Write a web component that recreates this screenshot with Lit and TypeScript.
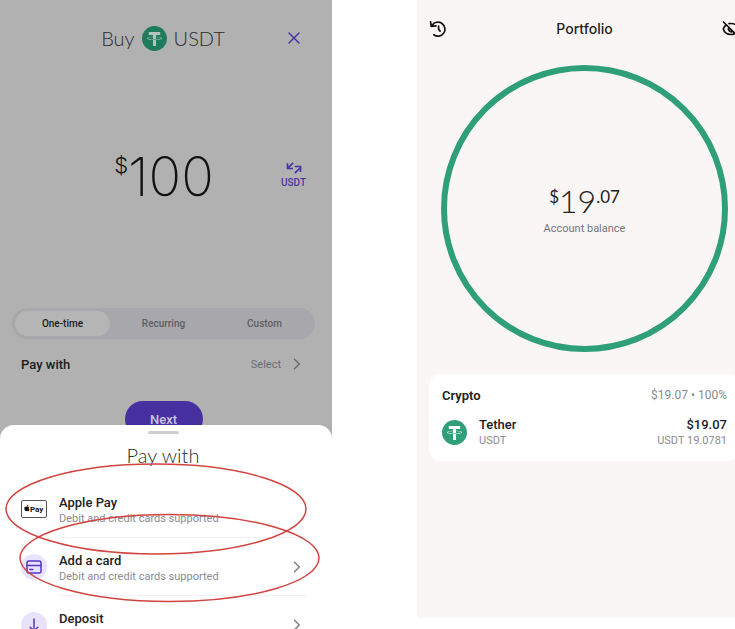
import { LitElement, html, css, svg } from "lit";
import { customElement, property, state } from "lit/decorators.js";
import { classMap } from "lit/directives/class-map.js";

const chevron = html`<svg class="chevron" viewBox="0 0 8 12" width="8" height="12" aria-hidden="true">
  <path d="M1.5 1.2 6.3 6 1.5 10.8" fill="none" stroke="currentColor" stroke-width="1.6" stroke-linecap="round" stroke-linejoin="round" />
</svg>`;

@customElement("tether-logo")
class TetherLogo extends LitElement {
  @property({ type: Boolean }) dim = false;

  static styles = css`
    :host { display: block; flex: none; width: 25px; height: 25px; }
    .logo { display: block; width: 100%; height: 100%; }
    .coin { fill: #2f9f79; }
    .mark { fill: #fff; }
    .dim .coin { fill: #207a5c; }
    .dim .mark { fill: #b4c4bd; }
  `;
  render() {
    return html`<svg class=${classMap({ logo: true, dim: this.dim })} viewBox="0 0 32 32" aria-hidden="true">
      <circle class="coin" cx="16" cy="16" r="16" />
      <path class="mark" d="M17.9 17.4v0c-.1 0-.7.1-1.9.1-1 0-1.7 0-1.9-.1-3.9-.2-6.8-.9-6.8-1.7s2.9-1.5 6.8-1.7v2.700c.3 0 1 .1 1.900.1 1.200 0 1.700-.1 1.900-.1V14c3.900.2 6.800.9 6.800 1.700s-2.900 1.500-6.800 1.700m0-3.600v-2.400h5.400V7.800H8.700v3.600h5.400v2.400c-4.400.2-7.700 1.100-7.700 2.100s3.300 1.900 7.700 2.100v7.600h3.800V18c4.400-.2 7.700-1 7.700-2.100s-3.300-1.900-7.700-2.100" />
    </svg>`;
  }
}

@customElement("pay-option")
class PayOption extends LitElement {
  @property() label = "";
  @property() detail = "";
  @property() icon = "card";
  @property({ type: Boolean }) arrow = false;

  static styles = css`
    :host { display: block; }
    .option {
      display: flex; align-items: stretch; width: 100%; height: 58px; padding: 0 25px 0 21px;
      border: 0; background: none; font: inherit; color: inherit; text-align: left; gap: 12px;
    }
    .icon { flex: none; width: 26px; display: flex; align-items: center; justify-content: center; }
    .body { flex: 1; display: flex; align-items: center; border-bottom: 1px solid #f3f1f5; }
    .text { flex: 1; display: flex; flex-direction: column; padding-top: 4px; }
    .label { font-size: 13px; line-height: 17px; font-weight: 500; color: #222; }
    .detail { font-size: 11px; line-height: 16px; color: #8b8a93; min-height: 16px; }
    .chevron { color: #85848b; margin-right: 6px; }
    .disc { width: 26px; height: 26px; border-radius: 50%; background: #e9e2fc; display: grid; place-items: center; }
    .badge { display: block; }
    .mark { font-size: 8px; font-weight: 700; fill: #111; }
  `;

  private glyph() {
    if (this.icon === "apple") {
      return html`<svg class="badge" width="26" height="18" viewBox="0 0 26 18" aria-hidden="true">
        <rect x="0.5" y="0.5" width="25" height="17" rx="1.5" fill="#fff" stroke="#555" />
        <path fill="#111" d="M6.2 6.700c.6-.3 1.500-.3 2.100.4-.8.6-.8 1.800.2 2.300-.3 1-.9 1.900-1.500 1.900-.4 0-.6-.2-1-.2s-.6.200-1 .2c-.7 0-1.700-1.600-1.700-2.800 0-1.500 1.200-2.300 2.200-1.800zM6 6.300c0-.8.6-1.400 1.300-1.500.1.800-.5 1.500-1.300 1.500z" />
        <text class="mark" x="9" y="12">Pay</text>
      </svg>`;
    }
    const shape = this.icon === "card"
      ? svg`<rect x="1" y="2" width="14" height="12" rx="2" /><path d="M1 6.5h14M3.8 10.5h3" />`
      : svg`<path d="M8 2v12M4.2 10.2 8 14l3.8-3.8" />`;
    return html`<span class="disc"><svg width="16" height="16" viewBox="0 0 16 16" fill="none" stroke="#5436c4"
      stroke-width="1.5" stroke-linecap="round" stroke-linejoin="round" aria-hidden="true">${shape}</svg></span>`;
  }

  render() {
    return html`<button class="option">
      <span class="icon">${this.glyph()}</span>
      <span class="body">
        <span class="text"><span class="label">${this.label}</span><span class="detail">${this.detail}</span></span>
        ${this.arrow ? chevron : ""}
      </span>
    </button>`;
  }
}

@customElement("buy-screen")
class BuyScreen extends LitElement {
  @state() private schedule = "One-time";

  static styles = css`
    :host { display: flex; flex-direction: column; min-width: 0; overflow: hidden; background: #b1b1b1; color: #1c1c1c; }
    :host > * { flex-shrink: 0; }
    button { font: inherit; border: 0; padding: 0; background: none; color: inherit; }
    h1, h2, p { margin: 0; font-weight: 300; }
    .top { display: grid; grid-template-columns: 1fr auto 1fr; align-items: center; height: 40px; margin-top: 18px; padding: 0 31px 0 25px; }
    .title { grid-column: 2; display: flex; align-items: center; gap: 7px; font-family: Lato, sans-serif; font-size: 20px; line-height: 26px; color: #2c2c2c; }
    .close { justify-self: end; color: #4a34a4; width: 14px; height: 14px; }
    .close svg { display: block; }
    .amount { display: grid; grid-template-columns: 1fr auto 1fr; align-items: center; height: 72px; margin-top: 83px; padding: 0 26px 0 22px; }
    .value { grid-column: 2; display: flex; align-items: flex-start; font-family: Inter, sans-serif; font-size: 54px; line-height: 64px; font-weight: 200; color: #111; }
    .sign { font-size: 22px; line-height: 40px; font-weight: 300; }
    .swap { justify-self: end; display: flex; flex-direction: column; align-items: center; gap: 3px; padding-bottom: 3px; color: #4a34a4; font-size: 10px; line-height: 12px; font-weight: 500; }
    .tabs { display: grid; grid-template-columns: repeat(3, 1fr); margin: 95px 17px 0 12px; border-radius: 16px; background: #a8a8ac; }
    .tab { height: 25px; margin: 3px; border-radius: 13px; font-size: 10px; line-height: 12px; font-weight: 500; color: #5f5e65; }
    .on { background: #b5b5b5; color: #1c1c1c; }
    .method { display: flex; align-items: center; height: 20px; margin: 15px 31px 0 21px; font-size: 13px; }
    .name { flex: 1; font-weight: 500; text-align: left; }
    .pick { display: flex; align-items: center; gap: 12px; font-size: 11px; color: #6d6c73; }
    .next { align-self: center; width: 78px; height: 36px; margin: 27px 5px 0 0; border-radius: 18px; background: #4630a0; color: #c9c3e2; font-size: 13px; font-weight: 500; }
    .sheet { position: relative; flex-grow: 1; margin-top: -12px; padding-top: 6px; border-radius: 14px 14px 0 0; background: #fff; }
    .head { display: flex; flex-direction: column; align-items: center; gap: 8px; padding: 0 6px 12px 0; }
    .handle { width: 31px; height: 3px; border-radius: 2px; background: #cfcfcf; }
    .heading { font-family: Lato, sans-serif; font-size: 20px; line-height: 26px; color: #2c2c2c; }
    .rings { position: absolute; left: 0; top: 0; width: 100%; height: 180px; pointer-events: none; overflow: visible; }
  `;

  render() {
    return html`
      <header class="top">
        <h1 class="title">Buy <tether-logo dim></tether-logo> USDT</h1>
        <button class="close" aria-label="Close"><svg width="14" height="14" viewBox="0 0 14 14" aria-hidden="true">
          <path d="M2 2l10 10M12 2 2 12" stroke="currentColor" stroke-width="1.5" stroke-linecap="round" /></svg></button>
      </header>
      <div class="amount">
        <p class="value"><span class="sign">$</span>100</p>
        <button class="swap"><svg width="16" height="12" viewBox="0 0 16 12" fill="none" stroke="currentColor" stroke-width="1.7" aria-hidden="true">
          <path d="M7.2.8 1.8 6.2M1.500 1.200v5.300H7M8.800 11.200l5.200-5.200M8.800 4.500h5.700V10" /></svg>USDT</button>
      </div>
      <div class="tabs" role="group" aria-label="Schedule">
        ${["One-time", "Recurring", "Custom"].map((name) => html`<button
          class=${classMap({ tab: true, on: name === this.schedule })}
          aria-pressed=${name === this.schedule} @click=${() => (this.schedule = name)}>${name}</button>`)}
      </div>
      <button class="method"><span class="name">Pay with</span><span class="pick">Select ${chevron}</span></button>
      <button class="next">Next</button>
      <section class="sheet">
        <div class="head"><div class="handle"></div><h2 class="heading">Pay with</h2></div>
        <pay-option icon="apple" label="Apple Pay" detail="Debit and credit cards supported"></pay-option>
        <pay-option icon="card" label="Add a card" detail="Debit and credit cards supported" arrow></pay-option>
        <pay-option icon="deposit" label="Deposit" arrow></pay-option>
        <svg class="rings" viewBox="0 0 332 180" fill="none" stroke="#d0433f" stroke-width="1.5" aria-hidden="true">
          <ellipse cx="156" cy="84" rx="150" ry="45" /><ellipse cx="169.5" cy="133" rx="149.5" ry="43.5" />
        </svg>
      </section>`;
  }
}

@customElement("portfolio-screen")
class PortfolioScreen extends LitElement {
  static styles = css`
    :host { display: block; min-width: 0; background: #fbf6f6; color: #222; }
    button { font: inherit; border: 0; padding: 0; background: none; color: inherit; }
    h1, h2, p { margin: 0; }
    .bar { display: flex; align-items: center; justify-content: space-between; height: 24px; margin: 17px -5px 0 12px; }
    .bar svg { display: block; }
    .title { font-size: 14px; line-height: 24px; font-weight: 500; font-family: Inter, sans-serif; }
    .ring { display: flex; flex-direction: column; align-items: center; justify-content: center; box-sizing: border-box;
      margin: 24px 7px 0 24px; padding-top: 4px; aspect-ratio: 1; border: 6px solid #2f9f79; border-radius: 50%; }
    .balance { display: flex; align-items: flex-start; font-family: Lato, sans-serif; font-size: 32px; line-height: 32px; font-weight: 300; }
    .small { font-size: 17px; line-height: 24px; font-weight: 400; }
    .caption { font-size: 11px; line-height: 16px; margin-top: 4px; color: #77757a; }
    .card { margin: 22px -4px 0 12px; padding: 11px 12px 12px 13px; border-radius: 12px; background: #fff; }
    .line { display: flex; align-items: center; justify-content: space-between; height: 20px; }
    .group { font-size: 13px; font-weight: 600; }
    .share { font-size: 12px; color: #8b8a93; }
    .asset { display: flex; align-items: center; gap: 12px; margin-top: 10px; }
    .names { flex: 1; display: flex; flex-direction: column; padding-top: 2px; }
    .worth { text-align: right; }
    .main { font-size: 13px; line-height: 16px; font-weight: 500; }
    .sub { font-size: 11px; line-height: 16px; color: #8b8a93; }
  `;

  render() {
    return html`
      <header class="bar">
        <button aria-label="History"><svg width="18" height="18" viewBox="0 0 18 18" fill="none" stroke="#111" stroke-width="1.7" stroke-linecap="round" stroke-linejoin="round" aria-hidden="true">
          <path d="M3.200 5.200A7 7 0 1 1 4.800 14.800M1.600 1.800l.6 4.600 4.800-.6M9.600 6v3.300l1.500 1.800" /></svg></button>
        <h1 class="title">Portfolio</h1>
        <button aria-label="Hide balance"><svg width="18" height="18" viewBox="0 0 18 18" fill="none" stroke="#111" stroke-width="1.7" stroke-linecap="round" aria-hidden="true">
          <path d="M1.500 2l14 14M4 5C2.500 6.200 1.500 8 1.300 9c1 3.500 4 5.500 7.700 5.500 1.500 0 2.500-.3 3.500-.8M7 3.700c4.500-.8 8.500 1.300 9.700 5.300-.3 1-.9 2-1.700 2.800M6.800 7.500a3 3 0 0 0 4 4" /></svg></button>
      </header>
      <div class="ring">
        <p class="balance"><span class="small">$</span>19<span class="small">.07</span></p>
        <p class="caption">Account balance</p>
      </div>
      <section class="card">
        <div class="line"><h2 class="group">Crypto</h2><span class="share">$19.07 • 100%</span></div>
        <div class="asset">
          <tether-logo></tether-logo>
          <div class="names"><span class="main">Tether</span><span class="sub">USDT</span></div>
          <div class="names worth"><span class="main">$19.07</span><span class="sub">USDT 19.0781</span></div>
        </div>
      </section>`;
  }
}

@customElement("app-root")
class AppRoot extends LitElement {
  static styles = css`
    :host { display: block; background: #fff; font-family: Roboto, "Liberation Sans", sans-serif; }
    .page { display: grid; grid-template: 100% / 332fr 318fr; column-gap: 85px; height: 100vh; overflow: hidden; }
    .portfolio { margin-bottom: 11px; }
  `;
  render() {
    return html`<main class="page">
      <buy-screen></buy-screen>
      <portfolio-screen class="portfolio"></portfolio-screen>
    </main>`;
  }
}
